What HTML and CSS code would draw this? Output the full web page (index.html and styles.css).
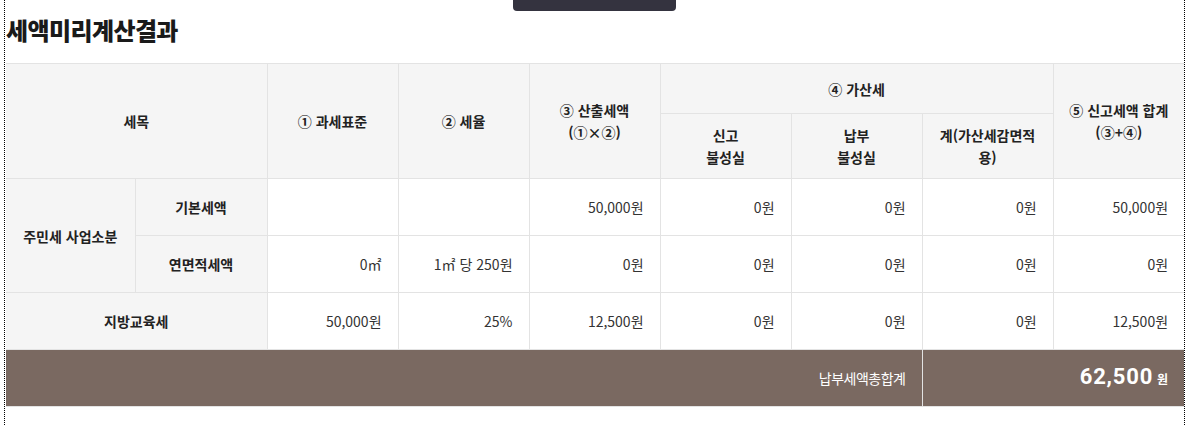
FILE: index.html
```html
<!DOCTYPE html>
<html lang="ko">
<head>
<meta charset="utf-8">
<title>세액미리계산결과</title>
<link rel="stylesheet" href="styles.css">
</head>
<body>
<div class="page">
  <div class="top-tab"></div>
  <h2 class="title">세액미리계산결과</h2>
  <table class="tax-table">
    <colgroup>
      <col class="c1"><col class="c2"><col class="cn"><col class="cn"><col class="cn"><col class="cn"><col class="cn"><col class="cn"><col class="cn">
    </colgroup>
    <thead>
      <tr class="h1">
        <th colspan="2" rowspan="2">세목</th>
        <th rowspan="2">① 과세표준</th>
        <th rowspan="2">② 세율</th>
        <th rowspan="2">③ 산출세액<br>(①×②)</th>
        <th colspan="3">④ 가산세</th>
        <th rowspan="2">⑤ 신고세액 합계<br>(③+④)</th>
      </tr>
      <tr class="h2">
        <th>신고<br>불성실</th>
        <th>납부<br>불성실</th>
        <th>계(가산세감면적용)</th>
      </tr>
    </thead>
    <tbody>
      <tr>
        <th rowspan="2">주민세 사업소분</th>
        <th>기본세액</th>
        <td></td>
        <td></td>
        <td>50,000원</td>
        <td>0원</td>
        <td>0원</td>
        <td>0원</td>
        <td>50,000원</td>
      </tr>
      <tr>
        <th>연면적세액</th>
        <td>0㎡</td>
        <td>1㎡ 당 250원</td>
        <td>0원</td>
        <td>0원</td>
        <td>0원</td>
        <td>0원</td>
        <td>0원</td>
      </tr>
      <tr>
        <th colspan="2">지방교육세</th>
        <td>50,000원</td>
        <td>25%</td>
        <td>12,500원</td>
        <td>0원</td>
        <td>0원</td>
        <td>0원</td>
        <td>12,500원</td>
      </tr>
    </tbody>
    <tfoot>
      <tr>
        <td colspan="7" class="sum-label">납부세액총합계</td>
        <td colspan="2" class="sum-value"><strong>62,500</strong> <span class="unit">원</span></td>
      </tr>
    </tfoot>
  </table>
</div>
</body>
</html>
```

FILE: styles.css
```css
html, body {
  margin: 0;
  padding: 0;
  background: #fff;
}

body {
  font-family: "Noto Sans CJK KR", "Noto Sans", sans-serif;
  color: #333;
}

.page {
  position: relative;
  margin-left: 4px;
  width: 1178px;
  min-height: 425px;
  padding-left: 1px;
  border-left: 1px dotted #000;
  border-right: 1px dotted #000;
}

.top-tab {
  position: absolute;
  top: 0;
  left: 508px;
  width: 163px;
  height: 11px;
  background: #34333f;
  border-radius: 0 0 4px 4px;
}

.title {
  margin: 0;
  padding-top: 12px;
  font-size: 24px;
  line-height: 36px;
  font-weight: 900;
  color: #1a1a1a;
  letter-spacing: -0.6px;
}

.tax-table {
  margin-top: 15px;
  width: 1178px;
  border-collapse: collapse;
  table-layout: fixed;
  border-top: 1px solid #2e2e38;
  font-size: 14px;
  line-height: 22px;
}

.c1 { width: 129px; }
.c2 { width: 132px; }
.cn { width: 131px; }

.tax-table th,
.tax-table td {
  border: 1px solid #e3e3e3;
  padding: 0 10px;
  vertical-align: middle;
}

.tax-table tr > :first-child { border-left: none; }
.tax-table tr > :last-child { border-right: none; }
.tax-table tbody tr:first-child + tr > :first-child { border-left: 1px solid #e3e3e3; }

.tax-table th {
  background: #f5f5f5;
  font-weight: 700;
  color: #222;
  text-align: center;
}

.h1 { height: 50px; }
.h2 { height: 65px; }

.tax-table tbody tr { height: 57px; }

.tax-table td {
  text-align: right;
  padding-right: 16px;
  color: #333;
  background: #fff;
}

.tax-table tfoot tr { height: 57px; }

.tax-table tfoot td {
  background: #7a6961;
  color: #fff;
  border-color: #e3e3e3;
  border-top: none;
}

.sum-label {
  font-size: 14px;
  letter-spacing: -0.5px;
}

.sum-value strong {
  font-family: Roboto, "Noto Sans CJK KR", sans-serif;
  font-size: 22px;
  font-weight: 700;
  letter-spacing: 0.8px;
}

.sum-value .unit {
  font-size: 12px;
  font-weight: 700;
}
```
